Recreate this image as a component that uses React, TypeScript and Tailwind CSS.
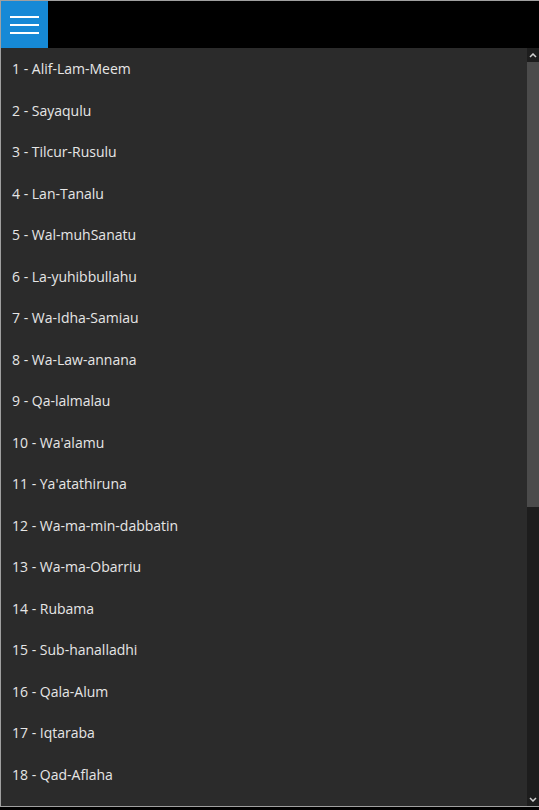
const items = [
  'Alif-Lam-Meem',
  'Sayaqulu',
  'Tilcur-Rusulu',
  'Lan-Tanalu',
  'Wal-muhSanatu',
  'La-yuhibbullahu',
  'Wa-Idha-Samiau',
  'Wa-Law-annana',
  'Qa-lalmalau',
  "Wa'alamu",
  "Ya'atathiruna",
  'Wa-ma-min-dabbatin',
  'Wa-ma-Obarriu',
  'Rubama',
  'Sub-hanalladhi',
  'Qala-Alum',
  'Iqtaraba',
  'Qad-Aflaha',
];

export default function App() {
  return (
    <div className="w-[539px] h-[810px] bg-black overflow-hidden" style={{ fontFamily: '"Open Sans", "Noto Sans", sans-serif' }}>
      <div className="w-[539px] h-[807px] border-t border-l border-b border-[#a0a0a0] flex flex-col">
        <div className="h-[47px] bg-black flex shrink-0">
          <button className="w-[47px] h-[47px] bg-[#1689d6] flex flex-col items-center justify-center gap-[6px]">
            <span className="block w-[29px] h-[2px] bg-white" />
            <span className="block w-[29px] h-[2px] bg-white" />
            <span className="block w-[29px] h-[2px] bg-white" />
          </button>
        </div>
        <div className="flex flex-1 min-h-0 bg-[#2b2b2b]">
          <ul className="flex-1 pt-[0px]">
            {items.map((name, i) => (
              <li key={i} className="h-[41.5px] flex items-center pl-[11px] text-[14px] text-[#e6e6e6]">
                {i + 1} - {name}
              </li>
            ))}
          </ul>
          <div className="w-[12px] mr-[0px] bg-[#1d1d1d] flex flex-col items-center">
            <div className="h-[14px] w-full flex items-center justify-center">
              <svg width="8" height="5" viewBox="0 0 8 5"><path d="M1 4 L4 1 L7 4" stroke="#d0d0d0" strokeWidth="1.5" fill="none" /></svg>
            </div>
            <div className="w-full h-[445px] bg-[#4b4b4b]" />
            <div className="flex-1" />
            <div className="h-[14px] w-full flex items-center justify-center">
              <svg width="8" height="5" viewBox="0 0 8 5"><path d="M1 1 L4 4 L7 1" stroke="#d0d0d0" strokeWidth="1.5" fill="none" /></svg>
            </div>
          </div>
        </div>
      </div>
    </div>
  );
}
